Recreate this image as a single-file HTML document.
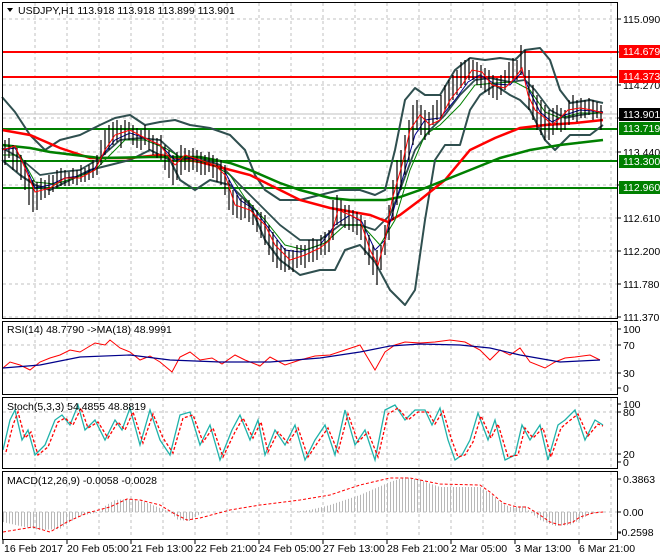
<!DOCTYPE html>
<html><head><meta charset="utf-8"><style>
body{margin:0;background:#fff;width:660px;height:560px;overflow:hidden}
svg{display:block;font-family:"Liberation Sans",sans-serif;font-size:10.5px}
</style></head><body>
<svg width="660" height="560" viewBox="0 0 660 560">
<defs>
<pattern id="hist" width="3" height="10" patternUnits="userSpaceOnUse"><rect x="0" y="0" width="1" height="10" fill="#b8b8b8"/></pattern>
</defs>
<rect width="660" height="560" fill="#fff"/>
<g stroke="#c0c0c0" stroke-dasharray="3,3" stroke-width="1">
<path d="M35 3V318M67 3V318M99 3V318M131 3V318M163 3V318M195 3V318M227 3V318M259 3V318M291 3V318M323 3V318M355 3V318M387 3V318M419 3V318M451 3V318M483 3V318M515 3V318M547 3V318M579 3V318M611 3V318"/>
<path d="M35 322V394M67 322V394M99 322V394M131 322V394M163 322V394M195 322V394M227 322V394M259 322V394M291 322V394M323 322V394M355 322V394M387 322V394M419 322V394M451 322V394M483 322V394M515 322V394M547 322V394M579 322V394M611 322V394"/>
<path d="M35 398V468M67 398V468M99 398V468M131 398V468M163 398V468M195 398V468M227 398V468M259 398V468M291 398V468M323 398V468M355 398V468M387 398V468M419 398V468M451 398V468M483 398V468M515 398V468M547 398V468M579 398V468M611 398V468"/>
<path d="M35 472V538M67 472V538M99 472V538M131 472V538M163 472V538M195 472V538M227 472V538M259 472V538M291 472V538M323 472V538M355 472V538M387 472V538M419 472V538M451 472V538M483 472V538M515 472V538M547 472V538M579 472V538M611 472V538"/>
<path d="M3 19H617M3 52H617M3 85H617M3 118H617M3 152H617M3 185H617M3 218H617M3 251H617M3 284H617M3 317H617"/>
<path d="M3 345H617M3 373H617M3 412H617M3 454H617M3 512H617"/>
</g>
<line x1="3" y1="114" x2="617" y2="114" stroke="#c0c0c0"/>
<g stroke-width="2">
<line x1="3" y1="52" x2="617" y2="52" stroke="#f00"/>
<line x1="3" y1="77" x2="617" y2="77" stroke="#f00"/>
<line x1="3" y1="129" x2="617" y2="129" stroke="#008000"/>
<line x1="3" y1="161" x2="617" y2="161" stroke="#008000"/>
<line x1="3" y1="188" x2="617" y2="188" stroke="#008000"/>
</g>
<g fill="none" stroke="#2f4f4f" stroke-width="2" stroke-linejoin="round">
<polyline points="2,97 15,112 30,135 45,150 60,140 80,135 100,125 115,118 130,115 145,125 160,122 175,120 190,125 210,128 230,135 245,150 255,175 265,190 280,200 300,200 320,195 340,190 360,190 375,195 385,190 395,150 405,100 415,88 425,95 440,95 455,70 470,58 485,60 500,58 515,60 525,50 540,48 550,60 560,90 570,103 590,100 603,103"/>
<polyline points="2,160 20,175 35,185 50,190 70,180 90,170 110,165 130,160 150,150 170,160 180,180 195,190 210,180 230,185 250,205 265,240 280,260 300,275 320,270 335,270 345,250 360,245 375,262 390,290 405,305 415,290 425,220 435,160 445,145 460,145 470,110 480,95 495,85 510,95 520,100 530,110 545,140 555,150 570,135 590,135 603,125"/>
<polyline stroke-width="1.8" points="2,148 20,158 40,175 60,172 80,170 100,158 120,140 140,138 160,140 180,158 200,158 220,165 240,185 260,205 280,225 300,240 320,240 340,225 360,225 375,230 390,215 400,190 415,150 430,130 445,115 460,95 475,80 490,78 510,82 525,80 535,90 550,110 565,118 580,115 603,112"/>
</g>
<polyline fill="none" stroke="#f00" stroke-width="2.5" points="2,130 30,135 60,148 90,158 130,158 160,155 200,162 250,175 280,190 300,200 330,208 370,215 388,222 400,215 420,200 445,180 470,150 495,138 520,128 545,125 575,123 603,120"/>
<polyline fill="none" stroke="#008000" stroke-width="2.5" points="2,145 30,148 50,152 100,158 150,157 200,157 230,163 250,170 280,183 300,190 330,198 350,200 385,200 400,197 420,190 445,180 470,170 500,158 530,150 560,145 603,140"/>
<polyline fill="none" stroke="#00008b" stroke-width="1" points="2,150 15,148 25,165 35,188 50,185 65,178 80,176 95,168 105,152 115,140 130,133 145,138 160,145 175,160 190,158 210,163 225,172 240,200 255,210 270,230 285,250 300,252 320,245 335,225 350,215 362,222 375,250 385,240 395,205 405,170 415,135 425,120 440,118 455,100 468,82 480,75 495,84 510,85 522,72 530,92 540,112 552,122 565,115 580,110 603,112"/>
<polyline fill="none" stroke="#008000" stroke-width="1" points="2,155 20,155 35,182 55,184 75,178 95,170 110,155 125,140 145,140 165,148 185,160 210,163 230,175 245,198 265,220 285,245 305,250 325,243 345,225 362,225 380,245 395,220 410,170 425,135 440,125 460,105 475,85 495,83 515,82 530,90 545,112 560,118 580,113 603,113"/>
<g stroke="#000" stroke-width="1.2">
<path d="M5 140V165M9 138V158M13 145V170M17 148V172M21 155V180M25 160V190M29 175V205M33 180V212M37 182V210M41 178V200M45 180V198M49 175V195M53 175V192M57 170V188M61 168V186M65 170V186M69 172V186M73 168V184M77 170V185M81 165V182M85 168V182M89 165V180M93 160V178M97 155V175M101 140V165M105 130V155M109 125V150M113 122V145M117 120V142M121 125V148M125 120V140M129 122V140M133 125V145M137 128V148M141 130V150M145 125V145M149 130V150M153 135V155M157 138V158M161 135V160M165 145V170M169 150V178M173 155V185M177 152V180M181 145V175M185 148V170M189 150V172M193 148V170M197 150V172M201 152V175M205 155V175M209 152V172M213 155V178M217 158V182M221 160V185M225 165V195M229 180V210M233 190V215M237 195V218M241 198V220M245 200V218M249 200V222M253 205V225M257 210V232M261 212V238M265 215V245M269 225V255M273 232V262M277 240V268M281 245V270M285 248V272M289 250V270M293 250V272M297 245V268M301 245V265M305 245V268M309 240V262M313 238V262M317 240V260M321 235V255M325 232V255M329 230V252M333 200V240M337 195V225M341 200V225M345 205V228M349 205V230M353 210V232M357 212V235M361 215V240M365 220V255M369 235V265M373 245V275M377 250V285M381 245V270M385 225V255M389 205V240M393 180V220M397 160V205M401 150V190M405 135V175M409 120V160M413 105V145M417 100V130M421 105V135M425 110V140M429 112V135M433 105V125M437 100V120M441 95V118M445 85V110M449 80V108M453 75V100M457 70V95M461 62V88M465 60V85M469 58V80M473 60V80M477 62V85M481 65V88M485 68V92M489 70V95M493 75V98M497 78V100M501 75V95M505 70V90M509 62V85M513 58V80M517 60V80M521 45V75M525 50V80M529 70V110M533 85V120M537 95V130M541 100V135M545 105V140M549 110V140M553 108V135M557 105V130M561 108V132M565 110V130M569 100V125M573 95V120M577 100V122M581 98V118M585 100V118M589 98V115M593 100V120M597 102V118M601 105V130"/>
</g>
<g fill="none" stroke="#f00" stroke-width="1"><polyline points="2,150 15,146 25,168 35,192 50,188 65,178 80,178 95,170 105,150 115,135 130,130 145,138 160,145 175,165 185,155 200,160 215,165 225,175 235,205 250,210 265,225 275,245 290,260 305,255 320,248 330,240 338,210 350,215 360,220 370,250 378,265 385,240 392,200 402,165 410,130 420,115 430,125 440,120 450,100 462,85 472,70 482,72 492,85 505,88 515,78 522,68 528,95 535,110 545,118 552,125 560,118 568,110 580,108 592,110 603,113"/></g>
<polyline fill="none" stroke="#f00" stroke-width="1" points="3,368 10,362 20,365 30,370 40,362 50,358 60,355 70,350 80,352 95,343 105,345 110,340 120,348 130,352 140,360 150,356 160,362 172,372 180,357 190,352 200,360 212,358 222,364 235,355 245,360 260,366 270,357 285,365 300,360 315,356 330,355 345,350 360,345 375,370 385,352 395,345 405,342 420,343 435,342 450,340 465,342 480,350 490,360 500,350 510,355 520,348 530,362 545,368 555,362 565,358 575,357 590,355 600,360"/>
<polyline fill="none" stroke="#00008b" stroke-width="1.2" points="3,368 40,365 80,357 130,355 170,360 220,362 270,362 320,358 360,352 390,346 420,344 460,345 490,348 520,355 560,362 600,360"/>
<polyline fill="none" stroke="#20b2aa" stroke-width="1.3" points="3,450 10,420 15,410 22,440 28,430 35,455 45,445 55,420 62,415 70,425 78,405 85,430 95,420 105,440 115,420 122,430 130,408 140,445 150,410 160,440 170,455 180,415 190,412 200,445 210,425 220,460 232,430 240,415 250,440 258,420 265,455 275,430 285,445 295,425 305,460 315,440 325,425 335,455 345,410 355,445 365,430 375,460 385,410 395,405 405,420 415,410 425,410 432,425 440,408 448,440 455,460 462,455 470,440 478,413 488,440 495,420 505,460 515,455 522,425 530,440 540,425 548,460 558,425 565,420 575,410 585,440 595,420 603,425"/>
<polyline fill="none" stroke="#f00" stroke-width="1.3" stroke-dasharray="3,2" points="6,452 13,425 18,412 25,438 31,432 38,455 48,447 58,422 65,418 73,425 81,408 88,428 98,422 108,438 118,422 125,430 133,412 143,443 153,414 163,438 173,453 183,418 193,415 203,442 213,428 223,457 235,432 243,418 253,438 261,422 268,452 278,432 288,443 298,428 308,457 318,442 328,428 338,452 348,414 358,442 368,432 378,457 388,414 398,408 408,420 418,412 428,412 435,424 443,411 451,438 458,457 465,455 473,442 481,416 491,438 498,424 508,457 518,455 525,428 533,438 543,428 551,457 561,428 568,422 578,414 588,436 598,424 603,426"/>
<!-- MACD histogram -->
<g fill="url(#hist)">
<polygon points="3,512 3,522 20,526 40,530 60,529 70,522 80,516 95,513 100,512"/>
<polygon points="100,512 105,506 115,500 130,499 145,502 160,508 170,512"/>
<polygon points="170,512 178,520 190,521 200,514 205,512"/>
<polygon points="290,512 310,510 330,505 360,495 390,482 405,477 420,480 440,487 480,487 490,493 500,502 510,507 525,506 530,512"/>
<polygon points="530,512 540,520 555,526 570,525 580,520 590,514 600,512"/>
</g>
<polyline fill="none" stroke="#f00" stroke-width="1" stroke-dasharray="3,2" points="3,532 33,527 50,532 67,522 87,513 110,507 127,499 140,500 160,505 173,513 187,520 200,518 230,510 260,505 300,500 330,495 360,485 390,478 410,478 440,484 480,485 490,492 503,503 517,507 527,507 537,513 550,522 560,525 573,522 580,517 593,513 603,512"/>
<g fill="none" stroke="#000" stroke-width="1">
<rect x="2.5" y="2.5" width="615" height="316"/>
<rect x="2.5" y="321.5" width="615" height="73"/>
<rect x="2.5" y="397.5" width="615" height="71"/>
<rect x="2.5" y="471.5" width="615" height="68"/>
</g>
<g stroke="#000"><path d="M617 19h4M617 52h4M617 85h4M617 118h4M617 152h4M617 185h4M617 218h4M617 251h4M617 284h4M617 317h4M617 329h4M617 345h4M617 373h4M617 388h4M617 404h4M617 412h4M617 454h4M617 462h4M617 479h4M617 512h4M617 532h4"/>
<path d="M3 540v4M67 540v4M131 540v4M195 540v4M259 540v4M323 540v4M387 540v4M451 540v4M515 540v4M579 540v4"/></g>
<g fill="#000">
<text x="623" y="23">115.090</text>
<text x="623" y="89">114.270</text>
<text x="623" y="156">113.440</text>
<text x="623" y="222">112.610</text>
<text x="623" y="255">112.200</text>
<text x="623" y="288">111.780</text>
<text x="623" y="321">111.370</text>
</g>
<rect x="619" y="45" width="41" height="13" fill="#f00"/><text x="623" y="55" fill="#fff">114.679</text>
<rect x="619" y="70" width="41" height="13" fill="#f00"/><text x="623" y="80" fill="#fff">114.373</text>
<rect x="619" y="108" width="41" height="13" fill="#000"/><text x="623" y="118" fill="#fff">113.901</text>
<rect x="619" y="122" width="41" height="13" fill="#008000"/><text x="623" y="132" fill="#fff">113.719</text>
<rect x="619" y="155" width="41" height="13" fill="#008000"/><text x="623" y="165" fill="#fff">113.300</text>
<rect x="619" y="181" width="41" height="13" fill="#008000"/><text x="623" y="191" fill="#fff">112.960</text>
<g fill="#000">
<text x="623" y="333">100</text><text x="623" y="349">70</text><text x="623" y="377">30</text><text x="623" y="392">0</text>
<text x="623" y="408">100</text><text x="623" y="416">80</text><text x="623" y="458">20</text><text x="623" y="466">0</text>
<text x="623" y="483">0.3863</text><text x="623" y="516">0.00</text><text x="618" y="536">-0.2598</text>
</g>
<path d="M7 8l6 0-3 4z" fill="#000"/>
<text x="18" y="14" fill="#000">USDJPY,H1  113.918 113.918 113.899 113.901</text>
<text x="7" y="333" fill="#000">RSI(14) 48.7790  -&gt;MA(18) 48.9991</text>
<text x="7" y="410" fill="#000">Stoch(5,3,3) 54.4855 48.8819</text>
<text x="7" y="484" fill="#000">MACD(12,26,9) -0.0058 -0.0028</text>
<g fill="#000">
<text x="4" y="552">16 Feb 2017</text>
<text x="67" y="552">20 Feb 05:00</text>
<text x="131" y="552">21 Feb 13:00</text>
<text x="195" y="552">22 Feb 21:00</text>
<text x="259" y="552">24 Feb 05:00</text>
<text x="323" y="552">27 Feb 13:00</text>
<text x="387" y="552">28 Feb 21:00</text>
<text x="451" y="552">2 Mar 05:00</text>
<text x="515" y="552">3 Mar 13:00</text>
<text x="579" y="552">6 Mar 21:00</text>
</g>
</svg>
</body></html>
